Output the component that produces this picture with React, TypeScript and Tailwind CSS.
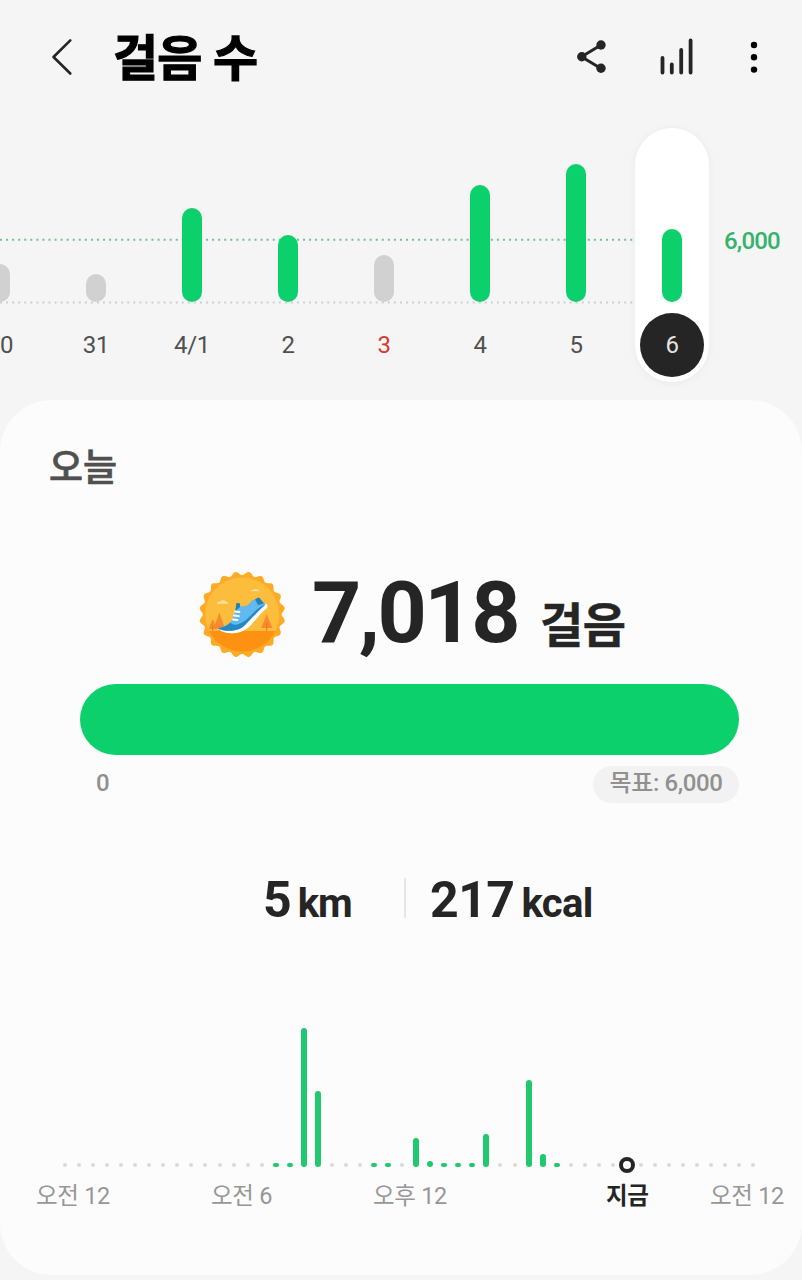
import React from "react";

const SANS = "font-['Roboto','Noto_Sans_CJK_KR',sans-serif]";

const days = [
  { label: "30", height: 38, met: false },
  { label: "31", height: 28, met: false },
  { label: "4/1", height: 94, met: true },
  { label: "2", height: 67, met: true },
  { label: "3", height: 47, met: false, holiday: true },
  { label: "4", height: 117, met: true },
  { label: "5", height: 138, met: true },
  { label: "6", height: 73, met: true, selected: true },
];

const slots: Record<number, number> = {
  15: 4, 16: 4, 17: 139, 18: 76, 22: 4, 23: 4, 25: 29, 26: 6,
  27: 4, 28: 4, 29: 4, 30: 33, 33: 87, 34: 13, 35: 4,
};
const NOW = 40;

function Header() {
  return (
    <header className="flex h-[116px] shrink-0 items-center pl-[50px]">
      <svg className="h-[40px] w-[24px]" viewBox="0 0 24 40" fill="none" stroke="#252525" strokeWidth="2.6" strokeLinecap="round" strokeLinejoin="round">
        <path d="M20.3 2.3 3.500 19 20.3 35.500" />
      </svg>
      <h1 className="ml-[39px] pt-[4px] text-[49px] font-bold leading-[60px] tracking-[-0.8px] text-black [-webkit-text-stroke:1.2px_#000]">걸음 수</h1>
      <div className="ml-auto flex items-center">
        <svg className="h-[36px] w-[32px]" viewBox="0 0 32 36" fill="#252525">
          <path d="M26 5 6.5 16.800 26 28.500" fill="none" stroke="#252525" strokeWidth="3" />
          <circle cx="26" cy="5" r="4.7" />
          <circle cx="6.800" cy="16.800" r="4.7" />
          <circle cx="26" cy="28.300" r="4.7" />
        </svg>
        <svg className="ml-[51px] h-[40px] w-[36px]" viewBox="0 0 36 40" stroke="#252525" strokeWidth="3.8" strokeLinecap="round">
          <path d="M4.500 20V34.500M13.800 26.500V34.500M23.200 12V34.500M32.600 2.500V34.500" />
        </svg>
        <svg className="ml-[50px] mr-[38px] h-[36px] w-[20px]" viewBox="0 0 20 36" fill="#000">
          <circle cx="10" cy="5" r="3.2" />
          <circle cx="10" cy="17.300" r="3.2" />
          <circle cx="10" cy="29.600" r="3.2" />
        </svg>
      </div>
    </header>
  );
}

function DayChart() {
  return (
    <section className="relative flex h-[284px] shrink-0">
      <svg className="absolute left-0 top-0 h-[200px] w-[636px]" viewBox="0 0 636 200" fill="none" strokeWidth="2">
        <path d="M0 123.700H636" stroke="#6cc494" strokeDasharray="2 4.06" />
        <path d="M0 186.5H636" stroke="#cfcfcf" strokeDasharray="2 4.06" />
      </svg>
      <div className="relative -ml-[48px] flex">
        {days.map((d) => (
          <div key={d.label} className="flex w-[96px] justify-center pt-[12px]">
            <div className={`flex h-[254px] w-[74px] flex-col items-center rounded-full ${d.selected ? "bg-white shadow-[0_1px_8px_rgba(0,0,0,0.05)]" : ""}`}>
              <div className="flex h-[174px] items-end">
                <div className={`w-[20px] rounded-full ${d.met ? "bg-[#0bd06c]" : "bg-[#d1d1d1]"}`} style={{ height: d.height }} />
              </div>
              <div className={`mt-[11px] flex h-[64px] w-[64px] items-center justify-center rounded-full text-[24px] tracking-[-0.3px] ${d.selected ? "bg-[#252525] text-[#e4e4e4]" : d.holiday ? "text-[#d33c34]" : "text-[#505050]"}`}>
                {d.label}
              </div>
            </div>
          </div>
        ))}
      </div>
      <div className="relative ml-[4px] pt-[109px] text-[24px] font-medium leading-[32px] tracking-[-0.8px] text-[#35b26b]">6,000</div>
    </section>
  );
}

function Badge() {
  const n = 20;
  let path = "";
  for (let i = 0; i <= 360; i++) {
    const a = (i * Math.PI) / 180;
    const r = 41.2 - 1.8 * Math.cos(n * a);
    path += `${i ? "L" : "M"}${(44.2 + r * Math.sin(a)).toFixed(2)} ${(43.5 - r * Math.cos(a)).toFixed(2)}`;
  }
  return (
    <svg className="h-[88px] w-[88px]" viewBox="0 0 88 88">
      <path d={path + "Z"} fill="#fdaa27" />
      <circle cx="44.2" cy="43.5" r="37" fill="#fbbd3b" />
      <path d="M11 60H77.400A37 37 0 0 1 11 60Z" fill="#fd9212" />
      <path d="M14.700 48 18.800 58H10.600ZM21.300 41.500 27 57.500H15.600ZM68.700 43 74.300 57H63.200Z" fill="#fb8a2b" />
      <path d="M68.200 52h1v8h-1ZM14.200 55h1v5h-1ZM20.800 55h1v5h-1Z" fill="#e9761c" />
      <path d="M18.700 32.800a2.500 2.500 0 0 1 3-2 3.800 3.200 0 0 1 6.500 0 2 2 0 0 1 2 2ZM53 20.300a2 2 0 0 1 2.500-1.300 3 2.500 0 0 1 5 .3L63 20.300Z" fill="#fde0a0" />
      <path d="M19.500 57.500C23 60.500 28 62.500 35 62.300 43 62 49 58.500 54 53 59 47 63 42 69.500 36.500L69 33 64.500 33C56 40 50 51 40 57Z" fill="#fff" />
      <path d="M19.500 57.500C26 56 31.500 53 34 49L38 38 38.500 32 42 32.500V35C46 36.500 51 34.500 54 29.500L61 26.500 67.500 33.500C59 41 53 48 47 54 40 61 28 61 19.500 57.500Z" fill="#61b9ef" />
      <path d="M19.500 57.500C26 56 30 54.500 32.500 51.500 36 56 44 53 50 47 55 42 60 36 67.500 33.500 59 41 53 48 47 54 40 61 28 61 19.500 57.500Z" fill="#2689c6" />
      <path d="M57 28.300 61 26.500 66 32.500 60 34ZM38.500 32 42 32.500V36L37 40.500Z" fill="#2281b7" />
      <path d="M37 40.500 41.500 41M36 44.500 41 45.200M35 48.500 39.500 49" stroke="#fff" strokeWidth="1.800" strokeLinecap="round" />
    </svg>
  );
}

function HourlyChart() {
  return (
    <div className="mt-[71px] px-[58px]">
      <div className="flex h-[164px] items-end">
        {Array.from({ length: 50 }, (_, i) => (
          <div key={i} className="flex h-full w-[14.06px] shrink-0 flex-col items-center justify-end">
            {i === NOW ? (
              <div className="-mb-[6px] h-[16px] w-[16px] shrink-0 rounded-full border-4 border-[#252525] bg-white" />
            ) : slots[i] ? (
              <div className="w-[6px] rounded-full bg-[#20c96d]" style={{ height: slots[i] }} />
            ) : (
              <div className="h-[4px] w-[4px] rounded-full bg-[#dadada]" />
            )}
          </div>
        ))}
      </div>
    </div>
  );
}

export default function App() {
  return (
    <main className={`flex h-[1280px] w-[802px] flex-col overflow-hidden bg-[#f5f5f5] ${SANS}`}>
      <Header />
      <DayChart />
      <section className="flex h-[875px] shrink-0 flex-col rounded-[52px] bg-[#fcfcfc]">
        <h2 className="ml-[49px] mt-[45px] text-[37px] font-medium leading-[48px] text-[#505050] [-webkit-text-stroke:0.7px_#505050]">오늘</h2>
        <div className="mt-[71px] flex h-[100px] pl-[198px] text-[#252525]">
          <div className="pt-[7px]"><Badge /></div>
          <div className="ml-[26px] text-[86px] font-bold leading-[97px] tracking-[-2.5px]">7,018</div>
          <div className="ml-[22px] pt-[32px] text-[47px] font-bold leading-[60px] tracking-[-0.5px] [-webkit-text-stroke:0.5px_#252525]">걸음</div>
        </div>
        <div className="ml-[80px] mt-[20px] h-[71px] w-[659px] rounded-full bg-[#0bd06c]" />
        <div className="ml-[80px] mt-[11px] flex h-[37px] w-[659px] items-center justify-between pl-[16px] text-[24px] font-medium text-[#909090]">
          <span className="pb-[2px] leading-[33px]">0</span>
          <span className="flex h-[37px] w-[146px] items-center justify-center rounded-full bg-[#f2f2f2] pb-[3px] tracking-[-0.4px]">목표: 6,000</span>
        </div>
        <div className="mt-[65px] flex h-[64px] items-center pl-[263px] font-bold text-[#252525]">
          <div className="flex w-[90px] items-baseline">
            <span className="text-[50px]">5</span>
            <span className="ml-[6px] text-[40px] tracking-[-1px]">km</span>
          </div>
          <div className="-mt-[4px] ml-[51px] h-[40px] w-[2px] bg-[#e6e6e6]" />
          <div className="ml-[24px] flex items-baseline">
            <span className="text-[50px] tracking-[-0.5px]">217</span>
            <span className="ml-[7px] text-[40px] tracking-[-0.7px]">kcal</span>
          </div>
        </div>
        <HourlyChart />
        <div className="mt-[12px] flex pl-[36px] text-[23.5px] leading-[34px] tracking-[-0.3px] text-[#979797]">
          <span className="w-[175px] shrink-0">오전 12</span>
          <span className="w-[162px] shrink-0">오전 6</span>
          <span className="w-[233px] shrink-0">오후 12</span>
          <span className="w-[104px] shrink-0 font-bold text-[#252525]">지금</span>
          <span className="shrink-0">오전 12</span>
        </div>
      </section>
    </main>
  );
}
